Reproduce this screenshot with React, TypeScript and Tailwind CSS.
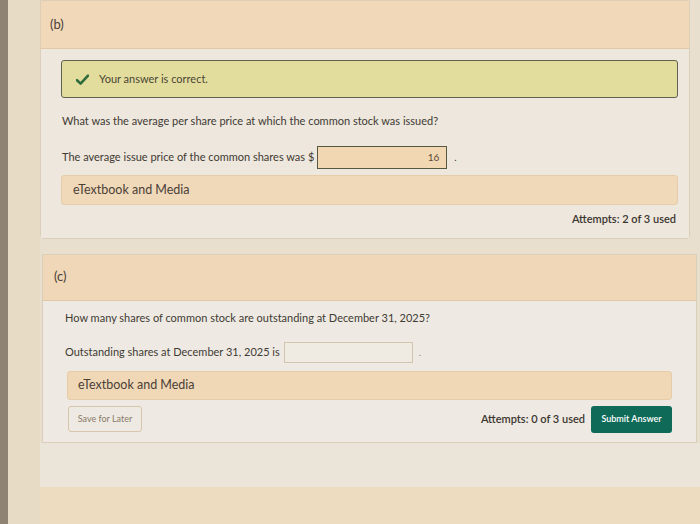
import React from 'react';

const font = { fontFamily: 'Lato, "Open Sans", sans-serif' };

const Check = () => (
  <svg width="13" height="11" viewBox="0 0 13 11" className="shrink-0">
    <path d="M1 6.2 L4.6 9.6 L12 1.6" fill="none" stroke="#2f6b3c" strokeWidth="2.6" strokeLinecap="round" strokeLinejoin="round" />
  </svg>
);

const App: React.FC = () => {
  return (
    <div className="w-[700px] h-[524px] overflow-hidden flex bg-[#e9dfcf] text-[#3f3a33]" style={font}>
      {/* dark edge of the monitor */}
      <div className="w-[8px] bg-[#8f8373] shrink-0" />
      <div className="w-[32px] bg-[#e7dbc6] shrink-0" />

      <div className="flex-1 flex flex-col">
        {/* Part (b) */}
        <div className="w-[650px] border border-[#dccfb9] rounded-b-sm">
          <div className="h-[48px] bg-[#f1d8b9] border-b border-[#e2c8a6] flex items-center pl-[9px]">
            <span className="text-[13px] text-[#4a4038]">(b)</span>
          </div>
          <div className="bg-[#ede7dd] pt-[11px] pb-[10px] pl-[20px] pr-[11px]">
            <div className="h-[38px] bg-[#e3dd9d] border border-[#5f624e] rounded-[3px] flex items-center gap-[10px] pl-[14px]">
              <Check />
              <span className="text-[11px] text-[#4a4535]">Your answer is correct.</span>
            </div>
            <p className="mt-[16px] text-[11px] leading-[14px] pl-[1px]">
              What was the average per share price at which the common stock was issued?
            </p>
            <div className="mt-[18px] flex items-center pl-[1px]">
              <span className="text-[11px]">The average issue price of the common shares was $</span>
              <div className="ml-[3px] w-[130px] h-[23px] bg-[#f2d7b3] border border-[#56583f] flex items-center justify-end pr-[7px]">
                <span className="text-[10px] text-[#5a4a3a]">16</span>
              </div>
              <span className="ml-[7px] text-[10px]">.</span>
            </div>
            <div className="mt-[6px] h-[30px] bg-[#f0d9b8] border border-[#e6cca8] rounded-[3px] flex items-center pl-[11px]">
              <span className="text-[12.5px] text-[#4a4038]">eTextbook and Media</span>
            </div>
            <div className="mt-[6px] flex justify-end pr-[2px]">
              <span className="text-[11px] font-semibold text-[#3b352f]">Attempts: 2 of 3 used</span>
            </div>
          </div>
        </div>

        {/* Part (c) */}
        <div className="mt-[15px] ml-[2px] w-[655px] border border-[#dccfb9]">
          <div className="h-[46px] bg-[#f0d7b7] border-b border-[#e2c8a6] flex items-center pl-[11px]">
            <span className="text-[13px] text-[#4a4038]">(c)</span>
          </div>
          <div className="bg-[#eeeae3] pt-[10px] pb-[9px] pl-[22px] pr-[24px]">
            <p className="text-[11px] leading-[14px]">
              How many shares of common stock are outstanding at December 31, 2025?
            </p>
            <div className="mt-[17px] flex items-center">
              <span className="text-[11px]">Outstanding shares at December 31, 2025 is</span>
              <div className="ml-[4px] w-[129px] h-[21px] bg-[#efeae2] border border-[#d3c5ad]" />
              <span className="ml-[6px] text-[10px] text-[#8a8070]">.</span>
            </div>
            <div className="mt-[8px] ml-[2px] h-[29px] bg-[#f0d8b7] border border-[#e6cca8] rounded-[3px] flex items-center pl-[10px]">
              <span className="text-[12.5px] text-[#4a4038]">eTextbook and Media</span>
            </div>
            <div className="mt-[6px] ml-[3px] flex items-center">
              <div className="h-[26px] w-[74px] border border-[#d8c6ac] rounded-[3px] flex items-center justify-center">
                <span className="text-[9px] text-[#8a7a68]">Save for Later</span>
              </div>
              <span className="ml-auto text-[11px] font-semibold text-[#3b352f]">Attempts: 0 of 3 used</span>
              <div className="ml-[6px] h-[27px] w-[81px] bg-[#0f6b58] rounded-[3px] flex items-center justify-center">
                <span className="text-[9px] font-semibold text-white">Submit Answer</span>
              </div>
            </div>
          </div>
        </div>

        <div className="h-[44px] bg-[#ebe4d8]" />
        <div className="flex-1 bg-[#eedcc1]" />
      </div>
    </div>
  );
};

export default App;
